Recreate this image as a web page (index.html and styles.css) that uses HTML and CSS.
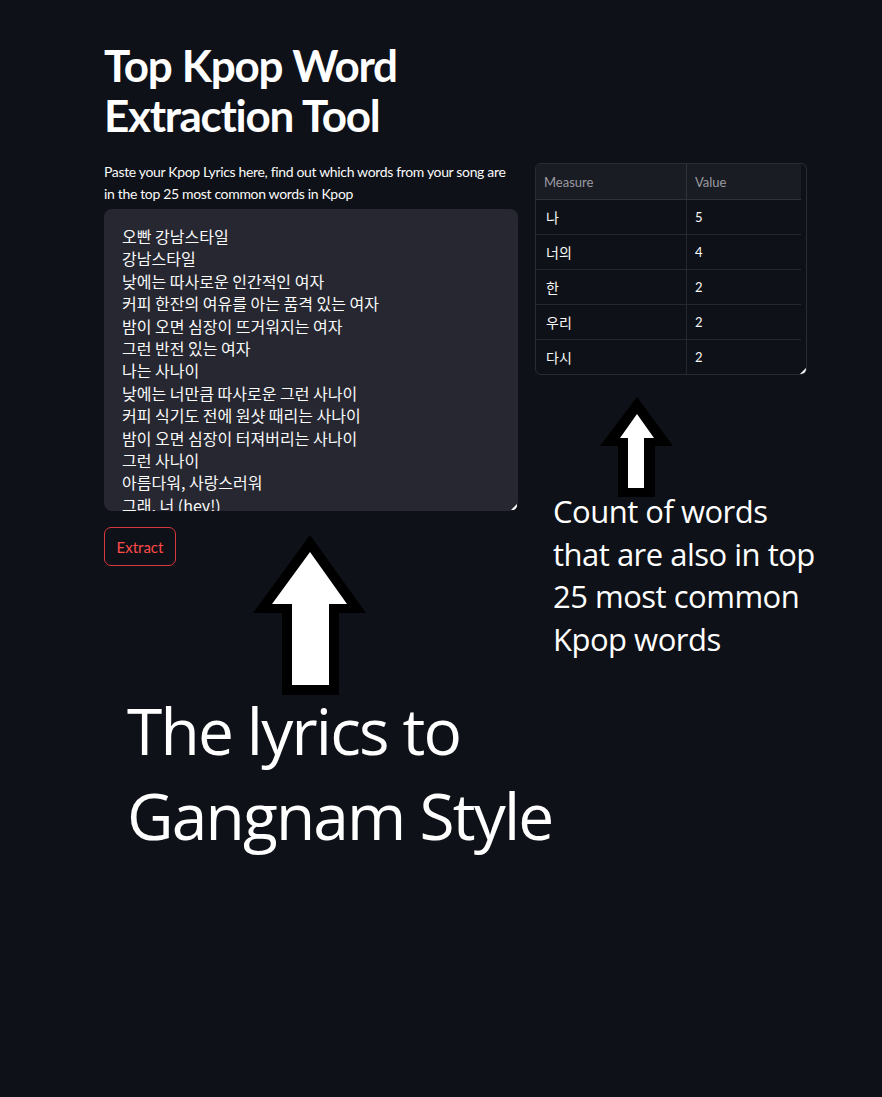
FILE: index.html
```html
<!DOCTYPE html>
<html lang="en">
<head>
<meta charset="utf-8">
<title>Top Kpop Word Extraction Tool</title>
<link rel="stylesheet" href="styles.css">
</head>
<body>
<main class="page">
  <section class="col-left">
    <h1 class="title">Top Kpop Word<br>Extraction Tool</h1>
    <p class="label">Paste your Kpop Lyrics here, find out which words from your song are in the top 25 most common words in Kpop</p>
    <div class="lyrics">
      <div class="lyrics-text">오빤 강남스타일
강남스타일
낮에는 따사로운 인간적인 여자
커피 한잔의 여유를 아는 품격 있는 여자
밤이 오면 심장이 뜨거워지는 여자
그런 반전 있는 여자
나는 사나이
낮에는 너만큼 따사로운 그런 사나이
커피 식기도 전에 원샷 때리는 사나이
밤이 오면 심장이 터져버리는 사나이
그런 사나이
아름다워, 사랑스러워
그래, 너 (hey!)</div>
      <span class="grip"></span>
    </div>
    <div class="action-row">
      <button class="btn">Extract</button>
      <svg class="arrow-big" width="114" height="161" viewBox="0 0 114 161">
        <polygon points="57,0 113,78 86,78 86,160 29,160 29,78 0,78" fill="#000"/>
        <polygon points="57,17 94,69 76,69 76,150 39,150 39,69 19,69" fill="#fff"/>
      </svg>
    </div>
    <p class="note note-big">The lyrics to<br>Gangnam Style</p>
  </section>
  <section class="col-right">
    <div class="table-wrap">
      <table class="data">
        <thead>
          <tr><th>Measure</th><th>Value</th></tr>
        </thead>
        <tbody>
          <tr><td class="ko">나</td><td>5</td></tr>
          <tr><td class="ko">너의</td><td>4</td></tr>
          <tr><td class="ko">한</td><td>2</td></tr>
          <tr><td class="ko">우리</td><td>2</td></tr>
          <tr><td class="ko">다시</td><td>2</td></tr>
        </tbody>
      </table>
      <span class="grip grip-table"></span>
    </div>
    <svg class="arrow-small" width="74" height="101" viewBox="0 0 74 101">
      <polygon points="37,0 73,49 55,49 55,100 18,100 18,49 0,49" fill="#000"/>
      <polygon points="37,17 54,41 44,41 44,91 28,91 28,41 20,41" fill="#fff"/>
    </svg>
    <p class="note note-small">Count of words<br>that are also in top<br>25 most common<br>Kpop words</p>
  </section>
</main>
</body>
</html>
```

FILE: styles.css
```css
html, body {
  margin: 0;
  padding: 0;
  background: #0e1117;
  color: #fafafa;
}
body {
  font-family: "Lato", "Noto Sans", sans-serif;
  width: 882px;
  height: 1097px;
  overflow: hidden;
}
.page {
  display: flex;
  gap: 17px;
  padding: 40px 0 0 104px;
}
.col-left {
  width: 414px;
  display: flex;
  flex-direction: column;
}
.col-right {
  width: 272px;
  padding-top: 123px;
  display: flex;
  flex-direction: column;
}
.title {
  margin: 0;
  font-size: 44px;
  line-height: 50px;
  font-weight: 700;
  color: #fff;
  letter-spacing: -1.3px;
  word-spacing: 1px;
}
.label {
  margin: 21px 0 4px;
  padding-right: 6px;
  font-size: 14px;
  line-height: 22px;
  letter-spacing: -0.34px;
  color: #fafafa;
}
.lyrics {
  position: relative;
  height: 302px;
  background: #262730;
  border-radius: 8px;
  overflow: hidden;
}
.lyrics-text {
  white-space: pre-line;
  padding: 16px 18px;
  font-family: "Noto Sans CJK KR", "Noto Sans", sans-serif;
  font-size: 16px;
  line-height: 22.4px;
  color: #fafafa;
}
.grip {
  position: absolute;
  right: 1px;
  bottom: 1px;
  width: 0;
  height: 0;
  border-left: 6px solid transparent;
  border-bottom: 6px solid #fafafa;
}
.action-row {
  display: flex;
  align-items: flex-start;
  margin-top: 16px;
}
.btn {
  font-family: "Lato", "Noto Sans", sans-serif;
  font-size: 15px;
  color: #ff4b4b;
  background: transparent;
  border: 1px solid #d9383f;
  border-radius: 7px;
  width: 72px;
  height: 39px;
  padding: 0;
}
.arrow-big {
  margin: 8px 0 0 77px;
  display: block;
}
.note {
  margin: 0;
  color: #fff;
  font-family: "Open Sans", "Noto Sans", sans-serif;
  font-weight: 400;
  white-space: nowrap;
}
.note-big {
  margin: -8px 0 0 23px;
  font-size: 64px;
  line-height: 85px;
  letter-spacing: -1.8px;
}
.table-wrap {
  position: relative;
  border: 1px solid rgba(250, 250, 250, 0.12);
  border-radius: 6px;
  height: 210px;
  overflow: hidden;
}
.data {
  border-collapse: collapse;
  width: 265px;
  font-size: 13px;
}
.data th {
  background: #1a1c24;
  color: #9a9ba0;
  font-weight: 400;
  text-align: left;
  height: 35px;
  padding: 0 8px;
  font-size: 13px;
}
.data td {
  height: 34px;
  padding: 0 8px;
  border-top: 1px solid rgba(250, 250, 250, 0.1);
  color: #fafafa;
}
.data th:first-child,
.data td:first-child {
  width: 132px;
  border-right: 1px solid rgba(250, 250, 250, 0.1);
}
.data td.ko {
  font-family: "Noto Sans CJK KR", "Noto Sans", sans-serif;
  font-size: 14px;
  padding-left: 10px;
}
.grip-table {
  right: 0;
  bottom: 0;
}
.arrow-small {
  display: block;
  margin: 22px 0 0 65px;
}
.note-small {
  margin: -8px 0 0 18px;
  font-size: 31px;
  line-height: 42.5px;
  letter-spacing: -0.5px;
}
```
